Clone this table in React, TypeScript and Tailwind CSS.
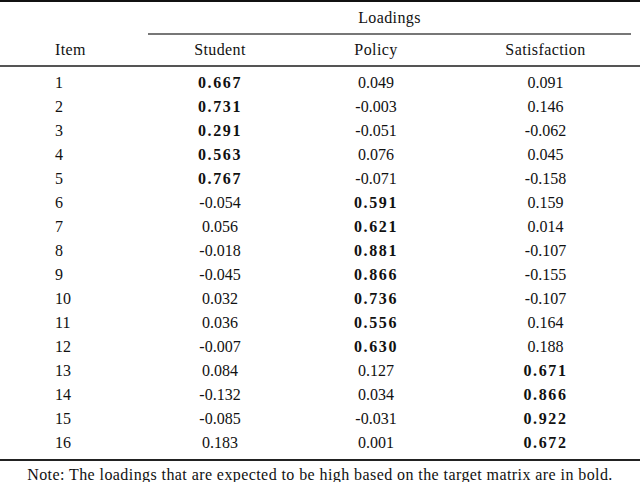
type Row = { item: number; values: string[]; bold: number };

const rows: Row[] = [
  { item: 1, values: ["0.667", "0.049", "0.091"], bold: 0 },
  { item: 2, values: ["0.731", "-0.003", "0.146"], bold: 0 },
  { item: 3, values: ["0.291", "-0.051", "-0.062"], bold: 0 },
  { item: 4, values: ["0.563", "0.076", "0.045"], bold: 0 },
  { item: 5, values: ["0.767", "-0.071", "-0.158"], bold: 0 },
  { item: 6, values: ["-0.054", "0.591", "0.159"], bold: 1 },
  { item: 7, values: ["0.056", "0.621", "0.014"], bold: 1 },
  { item: 8, values: ["-0.018", "0.881", "-0.107"], bold: 1 },
  { item: 9, values: ["-0.045", "0.866", "-0.155"], bold: 1 },
  { item: 10, values: ["0.032", "0.736", "-0.107"], bold: 1 },
  { item: 11, values: ["0.036", "0.556", "0.164"], bold: 1 },
  { item: 12, values: ["-0.007", "0.630", "0.188"], bold: 1 },
  { item: 13, values: ["0.084", "0.127", "0.671"], bold: 2 },
  { item: 14, values: ["-0.132", "0.034", "0.866"], bold: 2 },
  { item: 15, values: ["-0.085", "-0.031", "0.922"], bold: 2 },
  { item: 16, values: ["0.183", "0.001", "0.672"], bold: 2 },
];

const grid = "grid grid-cols-[148px_144px_168px_171px_9px]";

function App() {
  return (
    <div className="w-[640px] h-[482px] bg-white text-[#111] text-[16px] font-[family-name:Liberation_Serif,serif] overflow-hidden">
      {/* top rule */}
      <div className="h-[2px] bg-[#111]" />

      {/* spanning header */}
      <div className={`${grid} h-[31px] items-center`}>
        <div />
        <div className="col-span-3 text-center tracking-[0.4px]">Loadings</div>
        <div />
      </div>
      <div className={grid}>
        <div />
        <div className="col-span-3 h-[2px] bg-[#777]" />
        <div />
      </div>

      {/* column header */}
      <div className={`${grid} h-[30px] items-center tracking-[0.4px]`}>
        <div className="pl-[55px]">Item</div>
        <div className="text-center">Student</div>
        <div className="text-center">Policy</div>
        <div className="text-center">Satisfaction</div>
        <div />
      </div>
      <div className="h-[2px] bg-[#555]" />

      {/* body */}
      <div className="pt-[4px] pb-[4px]">
        {rows.map((r) => (
          <div key={r.item} className={`${grid} h-[24px] items-center`}>
            <div className="pl-[55px]">{r.item}</div>
            {r.values.map((v, i) => (
              <div
                key={i}
                className={
                  i === r.bold
                    ? "text-center font-bold tracking-[1.6px]"
                    : "text-center"
                }
              >
                {v}
              </div>
            ))}
            <div />
          </div>
        ))}
      </div>
      <div className="h-[2px] bg-[#222]" />

      {/* note */}
      <div className="pt-[4px] leading-[20px] text-center tracking-[0.42px]">
        Note: The loadings that are expected to be high based on the target
        matrix are in bold.
      </div>
    </div>
  );
}

export default App;
